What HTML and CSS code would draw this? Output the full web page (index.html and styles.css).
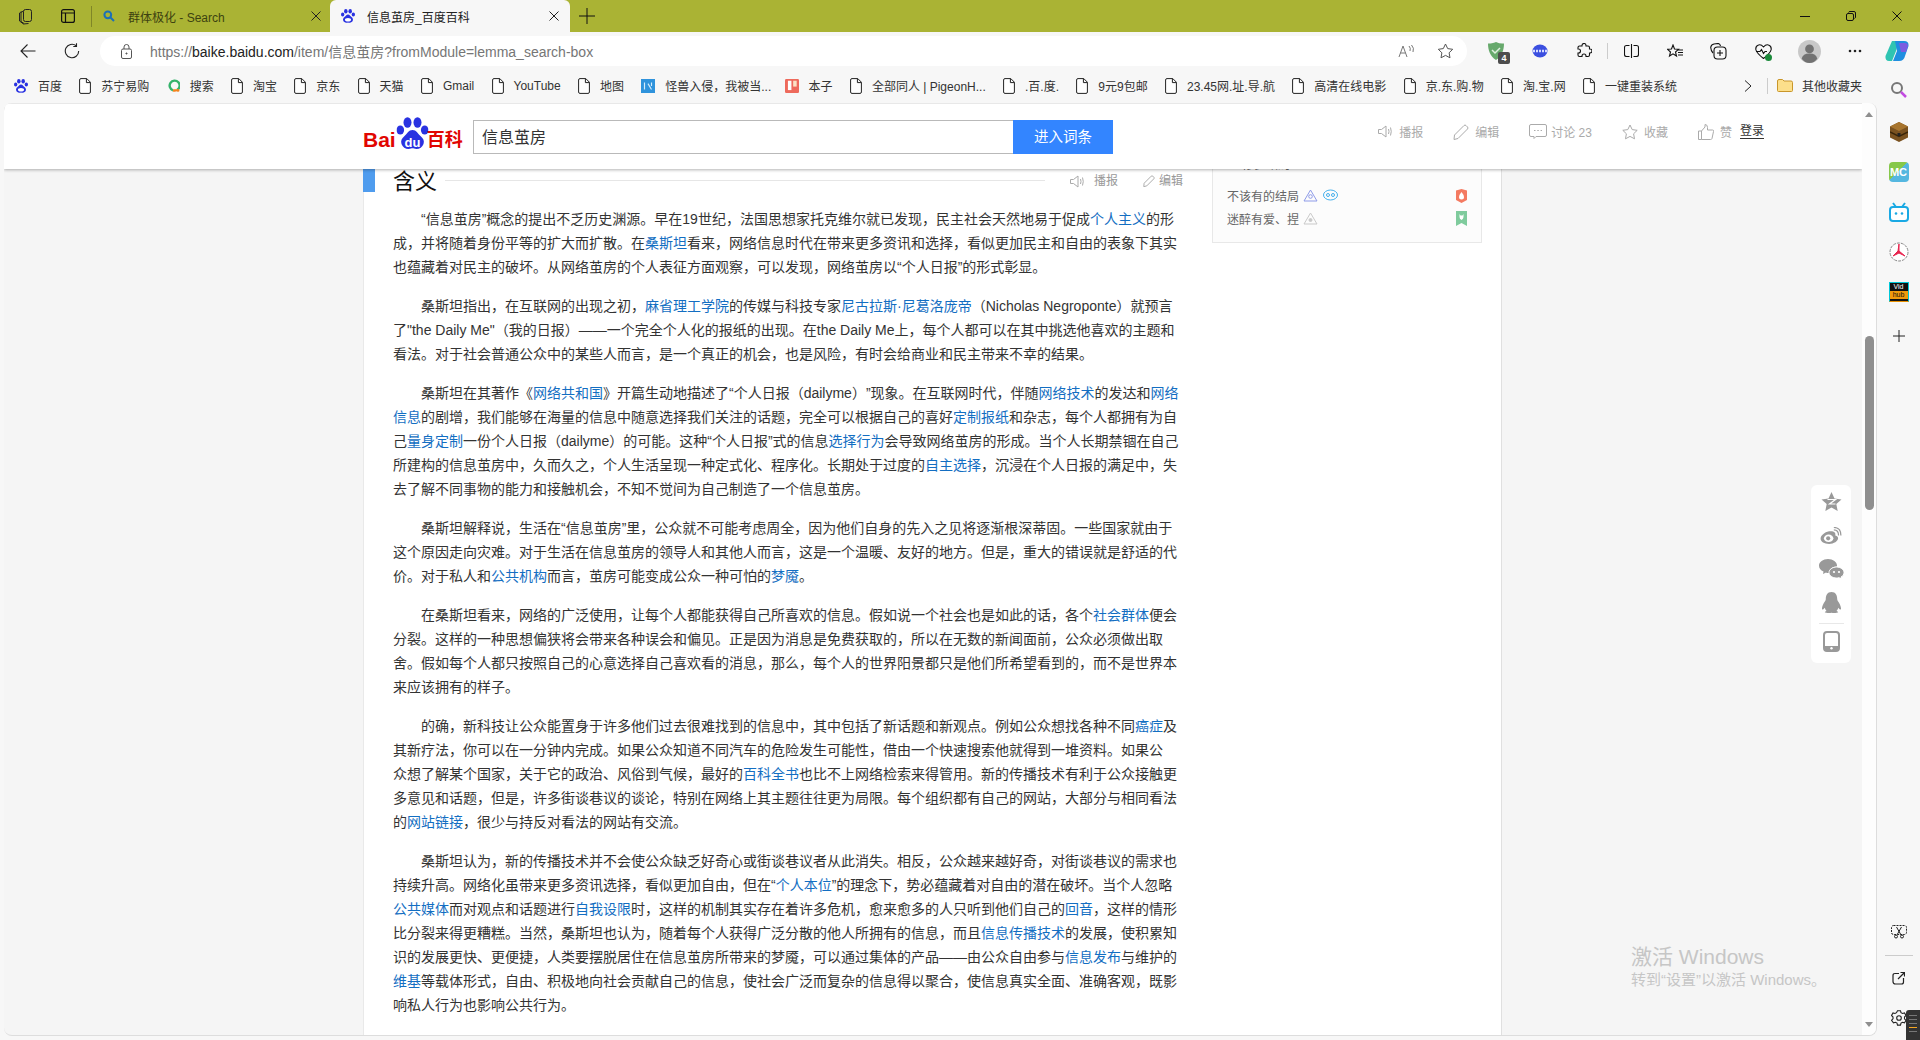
FILE: index.html
```html
<!DOCTYPE html>
<html lang="zh-CN">
<head>
<meta charset="UTF-8">
<title>信息茧房_百度百科</title>
<link rel="stylesheet" href="styles.css">
</head>
<body>

<svg class="defs" width="0" height="0">
  <symbol id="page" viewBox="0 0 12 16">
    <path d="M.6 2A1.400 1.400 0 0 1 2 .6h5.800l3.600 3.600V14A1.400 1.400 0 0 1 10 15.400H2A1.400 1.400 0 0 1 .6 14zM7.400.8v3.800h3.800" fill="#fff" stroke="#222" stroke-width="1"/>
  </symbol>
  <symbol id="paw" viewBox="0 0 32 33">
    <g fill="#2932e1">
      <ellipse cx="11" cy="5.500" rx="4" ry="5.200"/>
      <ellipse cx="21" cy="5.500" rx="4" ry="5.200"/>
      <ellipse cx="3.800" cy="13" rx="3.800" ry="4.600"/>
      <ellipse cx="28.200" cy="13" rx="3.800" ry="4.600"/>
      <path d="M16 13c4 0 5 3.500 8 6 3 2.500 4 5 3 8-1 3-4 5-7 5-2 0-3-.7-4-.7s-2 .7-4 .7c-3 0-6-2-7-5-1-3 0-5.500 3-8 3-2.500 4-6 8-6z"/>
    </g>
    <ellipse cx="16" cy="25" rx="7" ry="4" fill="#fff"/>
  </symbol>
</svg>

<div class="titlebar">
  <div class="tb-left">
    <svg width="16" height="18" viewBox="0 0 16 18" fill="none" stroke="#222"><rect x="5.500" y="2.500" width="8" height="12" rx="2"/><path d="M3.500 4.500 1.500 6v8l4 3 5-.5"/><path d="M5.500 4 3 5.500v9l3 2"/></svg>
    <svg width="14" height="14" viewBox="0 0 14 14" fill="none" stroke="#111" stroke-width="1.200"><rect x=".6" y=".6" width="12.800" height="12.800" rx="2"/><path d="M.6 4h12.800M4.500 4v9.400"/></svg>
    <span class="tb-sep"></span>
  </div>
  <div class="tab">
    <svg class="tab-fav" width="12" height="12" viewBox="0 0 12 12" fill="none" stroke="#1c6fb8" stroke-width="2"><circle cx="4.800" cy="4.800" r="3.400"/><path d="m7.500 7.500 3.500 3.500"/></svg>
    <span class="tab-name">群体极化 - Search</span>
    <svg width="10" height="10" viewBox="0 0 10 10" stroke="#222"><path d="m.5.500 9 9m0-9-9 9"/></svg>
  </div>
  <div class="tab tab-on">
    <svg class="tab-fav" width="14" height="16"><use href="#paw"/></svg>
    <span class="tab-name">信息茧房_百度百科</span>
    <svg width="10" height="10" viewBox="0 0 10 10" stroke="#222"><path d="m.5.500 9 9m0-9-9 9"/></svg>
  </div>
  <svg class="tab-plus" width="16" height="16" viewBox="0 0 16 16" stroke="#111"><path d="M8 0v16M0 8h16"/></svg>
  <div class="win-btns">
    <svg width="10" height="10" viewBox="0 0 10 10" stroke="#111"><path d="M0 5.500h10"/></svg>
    <svg width="10" height="10" viewBox="0 0 10 10" fill="none" stroke="#111"><rect x=".5" y="2.500" width="7" height="7" rx="1.500"/><path d="M2.500 1.500Q2.800.5 4 .5h4q1.500 0 1.500 1.500v4q0 1-1 1.500"/></svg>
    <svg width="10" height="10" viewBox="0 0 10 10" stroke="#111"><path d="m.5.500 9 9m0-9-9 9"/></svg>
  </div>
</div>

<div class="toolbar">
  <svg width="16" height="16" viewBox="0 0 16 16" fill="none" stroke="#222" stroke-width="1.100"><path d="M15.500 8H1M7.500 1.500 1 8l6.500 6.500"/></svg>
  <svg width="16" height="16" viewBox="0 0 16 16" fill="none" stroke="#222" stroke-width="1.100"><path d="M14.700 8A6.700 6.700 0 1 1 12.200 2.800M12.500.3v3.200H9.300"/></svg>
  <div class="addr">
    <svg width="13" height="15" viewBox="0 0 13 15" fill="none" stroke="#555"><rect x="1.500" y="5" width="10" height="9.500" rx="1.500"/><path d="M4 5V3a2.500 2.500 0 0 1 5 0v2"/><circle cx="6.500" cy="9.500" r=".6" fill="#555"/></svg>
    <span class="url">https://<b>baike.baidu.com</b>/item/信息茧房?fromModule=lemma_search-box</span>
    <span class="addr-right">
      <svg width="18" height="14" viewBox="0 0 18 14" fill="none" stroke="#777"><path d="m1 13 4-11 4 11M2.500 9h5"/><path d="M11 2q2 2 1 5M13.500 1q3 3 1.500 7"/></svg>
      <svg width="17" height="16" viewBox="0 0 16 16" fill="none" stroke="#555"><path d="m8 1 2.200 4.600 5 .7-3.600 3.500.9 5L8 12.400l-4.500 2.400.9-5L.8 6.300l5-.7z"/></svg>
    </span>
  </div>
  <div class="tool-icons">
    <span class="cell ext-guard">
      <svg width="16" height="18" viewBox="0 0 16 18"><path d="M8 0q4 2 8 1.500C16 8 14 14 8 18 2 14 0 8 0 1.500 4 2 8 0 8 0z" fill="#67a96c"/><path d="m4 8 3 3 5-5" fill="none" stroke="#dff0df" stroke-width="1.500"/></svg>
      <span class="ext-count">4</span>
    </span>
    <span class="cell"><svg width="16" height="14" viewBox="0 0 16 14"><ellipse cx="8" cy="7" rx="7.500" ry="6.500" fill="#3b4fe0"/><path d="M1 7h14" stroke="#d6dcff" stroke-width="2.500" stroke-dasharray="2 1"/></svg></span>
    <span class="cell"><svg width="16" height="16" viewBox="0 0 16 16" fill="none" stroke="#111" stroke-width="1.100"><path d="M6 2.500a2 2 0 0 1 4 0V3h2q1.500 0 1.500 1.500V6H14a2 2 0 0 1 0 4h-.5v2q0 1.500-1.500 1.500h-2V13a2 2 0 0 0-4 0v.5H3.500Q2 13.500 2 12v-2h.5a2 2 0 0 0 0-4H2V4.500Q2 3 3.500 3H6z"/></svg></span>
    <span class="tool-sep"></span>
    <span class="cell"><svg width="15" height="14" viewBox="0 0 15 14" fill="none" stroke="#111" stroke-width="1.100"><path d="M7.500 0v14M5.500 1.500h-3q-2 0-2 2v7q0 2 2 2h3M9.500 1.500h3q2 0 2 2v7q0 2-2 2h-3"/></svg></span>
    <span class="cell"><svg width="16" height="15" viewBox="0 0 16 15" fill="none" stroke="#111" stroke-width="1.100"><path d="M6 1 7.500 5l4 .3-3 2.700 1 4-3.500-2.200L2.500 12l1-4-3-2.700 4-.3zM11 6h5M11 8.500h5M11 11h5"/></svg></span>
    <span class="cell"><svg width="18" height="17" viewBox="0 0 18 17" fill="none" stroke="#111" stroke-width="1.100"><path d="M3 10Q1 8 .7 4.500 1 1.500 4 1l4-.5q2 0 2.500 2.500"/><rect x="4" y="4" width="12" height="12" rx="3.500"/><path d="M10 7v6M7 10h6"/></svg></span>
    <span class="cell ext-heart">
      <svg width="17" height="15" viewBox="0 0 17 15" fill="none" stroke="#111" stroke-width="1.100"><path d="M8.500 3Q6 0 3.500 1 .5 2 .8 5.500 1.500 9 8.500 14.500 15.500 9 16.200 5.500 16.500 2 13.500 1 11 0 8.500 3zM1 7.500h4l1.500-2 2 4 1.500-2h2"/></svg>
      <i class="heart-dot"></i>
    </span>
    <span class="cell cell-gap"><svg width="23" height="23" viewBox="0 0 22 22"><circle cx="11" cy="11" r="11" fill="#c8c8c8"/><circle cx="11" cy="8.500" r="4.200" fill="#727272"/><path d="M3.500 18q1-5 7.500-5t7.500 5Q15.500 22 11 22t-7.500-4z" fill="#727272"/></svg></span>
    <span class="cell cell-gap"><svg width="14" height="4" viewBox="0 0 14 4" fill="#222"><circle cx="2" cy="2" r="1.300"/><circle cx="7" cy="2" r="1.300"/><circle cx="12" cy="2" r="1.300"/></svg></span>
    <span class="cell cell-last"><svg width="24" height="24" viewBox="0 0 24 24"><path d="M7 2h7l-3 10-4 10H4Q0 22 .5 17z" fill="#2fc4b2"/><path d="M10 2h9q5 0 4.500 5L20 17q-1 5-6 5H8l4-10z" fill="#1f8ee0"/><path d="M14 4h6q3 0 3 3l-2 6h-5z" fill="#7b5de0"/></svg></span>
  </div>
</div>

<div class="bookmarks">
  <span class="bm"><svg width="14" height="16"><use href="#paw"/></svg>百度</span>
  <span class="bm"><svg width="12" height="16"><use href="#page"/></svg>苏宁易购</span>
  <span class="bm"><svg width="13" height="13" viewBox="0 0 13 13" fill="none"><path d="M10 11A5 5 0 1 0 6 11.300" stroke="#35b36b" stroke-width="2.400"/><circle cx="11" cy="11.400" r="1.400" fill="#f4831f"/><path d="M6 11.300Q8 11.800 10 11" stroke="#f4831f" stroke-width="2.400"/></svg>搜索</span>
  <span class="bm"><svg width="12" height="16"><use href="#page"/></svg>淘宝</span>
  <span class="bm"><svg width="12" height="16"><use href="#page"/></svg>京东</span>
  <span class="bm"><svg width="12" height="16"><use href="#page"/></svg>天猫</span>
  <span class="bm"><svg width="12" height="16"><use href="#page"/></svg>Gmail</span>
  <span class="bm"><svg width="12" height="16"><use href="#page"/></svg>YouTube</span>
  <span class="bm"><svg width="12" height="16"><use href="#page"/></svg>地图</span>
  <span class="bm bm-tight"><svg width="14" height="14" viewBox="0 0 12 12"><rect width="12" height="12" fill="#2f93dc"/><path d="M3 3v6M6 4l3 5M9 3v3" stroke="#d4ecfb"/></svg>怪兽入侵，我被当...</span>
  <span class="bm"><svg width="14" height="14" viewBox="0 0 12 12"><rect width="12" height="12" rx="1" fill="#ee6a5c"/><rect x="2.500" y="1.500" width="3" height="8" fill="#fff"/><rect x="7" y="1.500" width="3" height="5" fill="#fbe3c6"/></svg>本子</span>
  <span class="bm"><svg width="12" height="16"><use href="#page"/></svg>全部同人 | PigeonH...</span>
  <span class="bm"><svg width="12" height="16"><use href="#page"/></svg>.百.度.</span>
  <span class="bm"><svg width="12" height="16"><use href="#page"/></svg>9元9包邮</span>
  <span class="bm"><svg width="12" height="16"><use href="#page"/></svg>23.45网.址.导.航</span>
  <span class="bm"><svg width="12" height="16"><use href="#page"/></svg>高清在线电影</span>
  <span class="bm"><svg width="12" height="16"><use href="#page"/></svg>京.东.购.物</span>
  <span class="bm"><svg width="12" height="16"><use href="#page"/></svg>淘.宝.网</span>
  <span class="bm"><svg width="12" height="16"><use href="#page"/></svg>一键重装系统</span>
  <svg class="bm-more" width="8" height="12" viewBox="0 0 8 12" fill="none" stroke="#222"><path d="m1 .5 6 5.500-6 5.500"/></svg>
  <span class="bm-sep"></span>
  <span class="bm bm-folder"><svg width="16" height="13" viewBox="0 0 16 13"><path d="M.5 2Q.5.500 2 .500h3.500l1.500 1.500h7q1.500 0 1.500 1.500v8q0 1-1 1H1.500q-1 0-1-1z" fill="#fcdf8b" stroke="#c9962a"/></svg>其他收藏夹</span>
</div>

<div class="window">
  <div class="viewport">
    <div class="wiki-header">
      <div class="logo">
        <span class="logo-bai">Bai</span>
        <svg class="logo-paw" width="35" height="33" viewBox="0 0 32 33">
          <use href="#paw" width="32" height="33"/>
          <ellipse cx="16" cy="25" rx="10" ry="6" fill="#2932e1"/>
          <text x="16" y="30" text-anchor="middle" class="paw-du">du</text>
        </svg>
        <span class="logo-bk">百科</span>
      </div>
      <div class="search">
        <div class="search-input">信息茧房</div>
        <div class="search-btn">进入词条</div>
      </div>
      <div class="actions">
        <span class="action"><svg width="15" height="13" viewBox="0 0 15 13" fill="none" stroke="#aaa"><path d="M.5 4.500h3L8 1v11L3.500 8.500h-3zM10.500 4q1 2.500 0 5M12.500 2.500q1.500 4 0 8"/></svg>播报</span>
        <span class="action"><svg width="16" height="16" viewBox="0 0 16 16" fill="none" stroke="#aaa"><path d="M1.500 11 11 1.500q1-1 2 0l1.500 1.500q1 1 0 2L5 14.500l-4 1z"/></svg>编辑</span>
        <span class="action action-talk"><svg width="18" height="15" viewBox="0 0 18 15" fill="none" stroke="#aaa"><path d="M2 .5h14q1.500 0 1.500 1.500v9q0 1.500-1.500 1.500H7l-2 2v-2H2Q.5 12.500.5 11V2Q.5.500 2 .500z"/><path d="M5 6.500h1.500m1.800 0h1.500m1.800 0H13"/></svg>讨论 23</span>
        <span class="action"><svg width="16" height="16" viewBox="0 0 16 16" fill="none" stroke="#aaa"><path d="m8 1 2.200 4.600 5 .7-3.600 3.500.9 5L8 12.400l-4.500 2.400.9-5L.8 6.300l5-.7z"/></svg>收藏</span>
        <span class="action action-like"><svg width="16" height="16" viewBox="0 0 16 16" fill="none" stroke="#aaa"><path d="M.5 7h3v8.500h-3zM3.500 7 7 3V.500q2.500 0 2.500 3V6h5q1.500 0 1 1.500l-1.500 7q-.3 1-1.500 1h-9"/></svg>赞</span>
        <span class="login">登录</span>
      </div>
    </div>

    <div class="page-body">
      <div class="article">
        <div class="para-title">
          <i class="title-mark"></i>
          <h2>含义</h2>
          <span class="title-line"></span>
          <span class="title-act title-act-one"><svg width="15" height="13" viewBox="0 0 15 13" fill="none" stroke="#aaa"><path d="M.5 4.500h3L8 1v11L3.500 8.500h-3zM10.500 4q1 2.500 0 5M12.500 2.500q1.500 4 0 8"/></svg>播报</span>
          <span class="title-act"><svg width="12" height="12" viewBox="0 0 16 16" fill="none" stroke="#aaa" stroke-width="1.300"><path d="M1.500 11 11 1.500q1-1 2 0l1.500 1.500q1 1 0 2L5 14.500l-4 1z"/></svg>编辑</span>
        </div>

        <p>“信息茧房”概念的提出不乏历史渊源。早在19世纪，法国思想家托克维尔就已发现，民主社会天然地易于促成<a>个人主义</a>的形<br>
        成，并将随着身份平等的扩大而扩散。在<a>桑斯坦</a>看来，网络信息时代在带来更多资讯和选择，看似更加民主和自由的表象下其实<br>
        也蕴藏着对民主的破坏。从网络茧房的个人表征方面观察，可以发现，网络茧房以“个人日报”的形式彰显。</p>

        <p>桑斯坦指出，在互联网的出现之初，<a>麻省理工学院</a>的传媒与科技专家<a>尼古拉斯·尼葛洛庞帝</a>（Nicholas Negroponte）就预言<br>
        了"the Daily Me"（我的日报）——一个完全个人化的报纸的出现。在the Daily Me上，每个人都可以在其中挑选他喜欢的主题和<br>
        看法。对于社会普通公众中的某些人而言，是一个真正的机会，也是风险，有时会给商业和民主带来不幸的结果。</p>

        <p>桑斯坦在其著作《<a>网络共和国</a>》开篇生动地描述了“个人日报（dailyme）”现象。在互联网时代，伴随<a>网络技术</a>的发达和<a>网络</a><br>
        <a>信息</a>的剧增，我们能够在海量的信息中随意选择我们关注的话题，完全可以根据自己的喜好<a>定制报纸</a>和杂志，每个人都拥有为自<br>
        己<a>量身定制</a>一份个人日报（dailyme）的可能。这种“个人日报”式的信息<a>选择行为</a>会导致网络茧房的形成。当个人长期禁锢在自己<br>
        所建构的信息茧房中，久而久之，个人生活呈现一种定式化、程序化。长期处于过度的<a>自主选择</a>，沉浸在个人日报的满足中，失<br>
        去了解不同事物的能力和接触机会，不知不觉间为自己制造了一个信息茧房。</p>

        <p>桑斯坦解释说，生活在“信息茧房”里，公众就不可能考虑周全，因为他们自身的先入之见将逐渐根深蒂固。一些国家就由于<br>
        这个原因走向灾难。对于生活在信息茧房的领导人和其他人而言，这是一个温暖、友好的地方。但是，重大的错误就是舒适的代<br>
        价。对于私人和<a>公共机构</a>而言，茧房可能变成公众一种可怕的<a>梦魇</a>。</p>

        <p>在桑斯坦看来，网络的广泛使用，让每个人都能获得自己所喜欢的信息。假如说一个社会也是如此的话，各个<a>社会群体</a>便会<br>
        分裂。这样的一种思想偏狭将会带来各种误会和偏见。正是因为消息是免费获取的，所以在无数的新闻面前，公众必须做出取<br>
        舍。假如每个人都只按照自己的心意选择自己喜欢看的消息，那么，每个人的世界阳景都只是他们所希望看到的，而不是世界本<br>
        来应该拥有的样子。</p>

        <p>的确，新科技让公众能置身于许多他们过去很难找到的信息中，其中包括了新话题和新观点。例如公众想找各种不同<a>癌症</a>及<br>
        其新疗法，你可以在一分钟内完成。如果公众知道不同汽车的危险发生可能性，借由一个快速搜索他就得到一堆资料。如果公<br>
        众想了解某个国家，关于它的政治、风俗到气候，最好的<a>百科全书</a>也比不上网络检索来得管用。新的传播技术有利于公众接触更<br>
        多意见和话题，但是，许多街谈巷议的谈论，特别在网络上其主题往往更为局限。每个组织都有自己的网站，大部分与相同看法<br>
        的<a>网站链接</a>，很少与持反对看法的网站有交流。</p>

        <p>桑斯坦认为，新的传播技术并不会使公众缺乏好奇心或街谈巷议者从此消失。相反，公众越来越好奇，对街谈巷议的需求也<br>
        持续升高。网络化虽带来更多资讯选择，看似更加自由，但在“<a>个人本位</a>”的理念下，势必蕴藏着对自由的潜在破坏。当个人忽略<br>
        <a>公共媒体</a>而对观点和话题进行<a>自我设限</a>时，这样的机制其实存在着许多危机，愈来愈多的人只听到他们自己的<a>回音</a>，这样的情形<br>
        比分裂来得更糟糕。当然，桑斯坦也认为，随着每个人获得广泛分散的他人所拥有的信息，而且<a>信息传播技术</a>的发展，使积累知<br>
        识的发展更快、更便捷，人类要摆脱居住在信息茧房所带来的梦魇，可以通过集体的产品——由公众自由参与<a>信息发布</a>与维护的<br>
        <a>维基</a>等载体形式，自由、积极地向社会贡献自己的信息，使社会广泛而复杂的信息得以聚合，使信息真实全面、准确客观，既影<br>
        响私人行为也影响公共行为。</p>
      </div>

      <div class="side-card">
        <div class="card-row card-row-cut"><span>▪ ▪ 修罗结局</span></div>
        <div class="card-row">
          <span>不该有的结局</span>
          <svg width="15" height="13" viewBox="0 0 15 13" fill="none" stroke="#8e9be8"><path d="M7.500 1 14 12H1z"/><circle cx="7.500" cy="7.500" r="1.800"/></svg>
          <svg class="card-ico2" width="15" height="13" viewBox="0 0 15 13" fill="none" stroke="#45b0ec"><ellipse cx="7.500" cy="6" rx="7" ry="5"/><circle cx="5" cy="6" r="1.500"/><circle cx="10" cy="6" r="1.500"/></svg>
          <svg class="card-flag" width="11" height="14" viewBox="0 0 11 14"><path d="M0 1.500 5.500 0 11 1.500V11l-5.500 3L0 11z" fill="#f47a61"/><path d="M5.500 3Q8 6 8 8a2.500 2.500 0 0 1-5 0q0-2 2.500-5z" fill="#fff"/></svg>
        </div>
        <div class="card-row">
          <span>迷醉有爱、捏</span>
          <svg width="15" height="13" viewBox="0 0 15 13" fill="none" stroke="#c9c9c9"><path d="M7.500 1 14 12H1z"/><circle cx="7.500" cy="8" r="1.500" fill="#c9c9c9"/></svg>
          <svg class="card-flag" width="11" height="15" viewBox="0 0 11 15"><path d="M0 0h11v15l-5.500-3L0 15z" fill="#7fcb9d"/><path d="M3.500 3v3q0 2 2 3 2-1 2-3V3l-1 1.500h-2z" fill="#fff"/></svg>
        </div>
      </div>
    </div>

    <div class="scrollbar">
      <i class="arrow-up"></i>
      <div class="scroll-track"><div class="scroll-thumb"></div></div>
      <i class="arrow-down"></i>
    </div>

    <div class="share-panel">
      <svg width="21" height="20" viewBox="0 0 20 20"><path d="m10 0 3 6.600 7 .8-5.200 4.700L16.200 19 10 15.500 3.800 19l1.400-6.900L0 7.400l7-.8z" fill="#999"/><path d="M6 7.500h8L8 12h6" fill="none" stroke="#fff" stroke-width="1.200"/></svg>
      <svg width="22" height="17" viewBox="0 0 22 18"><path d="M9 4.500C4 5.500 0 9 0 12.500 0 15.500 4 18 9 18s9.500-3 9.500-6c0-2-2-3-3-3 .8-3-1-5-6.500-4.500z" fill="#999"/><ellipse cx="8.500" cy="12" rx="5" ry="4" fill="#fff"/><circle cx="8" cy="12" r="2.200" fill="#999"/><path d="M14 3q5 0 5 6M14 .5q7.500 0 7.500 8.500" fill="none" stroke="#999" stroke-width="1.300"/></svg>
      <svg width="25" height="20" viewBox="0 0 25 20"><path d="M9 0c5 0 9 3 9 6.500 0 .5 0 .5-.1 1-4.500 0-7.900 3-7.900 6 0 .5 0 .5.100.5H9q-1 0-2-.5L4 15l.5-2.500Q0 10.500 0 6.500C0 3 4 0 9 0z" fill="#999"/><path d="M17.500 8c4 0 7.500 2.500 7.500 5.500 0 2-1 3.500-3 4.500l.5 2-2.500-1.300q-1.200.3-2.500.3c-4 0-7.500-2.500-7.500-5.500S13.500 8 17.500 8z" fill="#999" stroke="#fff"/><circle cx="15" cy="13" r="1.100" fill="#fff"/><circle cx="20" cy="13" r="1.100" fill="#fff"/></svg>
      <svg class="share-qq" width="21" height="21" viewBox="0 0 21 22"><path d="M10.500 0C15 0 16.500 3.500 16.500 7.500c0 .7.300 1.500.8 2.300 1.700 2.400 3.200 5.700 3.200 7.700 0 .8-.5 1-1.500.5l-1.500-1.500c-.2 1.300-.8 2.500-1.800 3.300 1.300.4 1.800 1 1.800 1.500 0 .5-2.500.7-4.500.7-1 0-1.500-.3-2.500-.3s-1.500.3-2.500.3c-2 0-4.500-.2-4.500-.7s.5-1.100 1.800-1.500c-1-.8-1.600-2-1.800-3.300L2 18c-1 .5-1.500.3-1.500-.5 0-2 1.500-5.300 3.200-7.700.5-.8.800-1.600.8-2.300C4.500 3.500 6 0 10.500 0z" fill="#999"/></svg>
      <span class="share-sep"></span>
      <svg width="17" height="21" viewBox="0 0 17 21"><rect x="1" y="1" width="15" height="19" rx="3" fill="none" stroke="#999" stroke-width="2"/><rect x="1" y="15" width="15" height="5" rx="1" fill="#999"/><circle cx="8.500" cy="17.300" r="1.200" fill="#fff"/></svg>
    </div>

    <div class="activate">
      <div class="activate-big">激活 Windows</div>
      <div class="activate-small">转到“设置”以激活 Windows。</div>
    </div>
  </div>

  <div class="edge-bar">
    <svg width="18" height="18" viewBox="0 0 18 18" fill="none"><circle cx="7" cy="7" r="5" stroke="#777" stroke-width="2"/><path d="m11 11 5 5" stroke="#c24ce0" stroke-width="2.500"/></svg>
    <svg class="edge-chest" width="18" height="20" viewBox="0 0 18 20"><path d="M9 0l9 4.500v11L9 20l-9-4.500v-11z" fill="#7a5220"/><path d="M0 4.500 9 9l9-4.500L9 0z" fill="#a8752e"/><path d="M0 10l9 4.500 9-4.500" fill="none" stroke="#3a2508" stroke-width="1.500"/><rect x="7.500" y="11" width="3" height="3" fill="#222"/></svg>
    <span class="mc-badge">MC</span>
    <svg width="20" height="20" viewBox="0 0 20 20"><path d="m4 1 3 4M16 1l-3 4" stroke="#1aa9e4" stroke-width="2"/><rect x="1" y="5" width="18" height="14" rx="3" fill="#fff" stroke="#1aa9e4" stroke-width="2"/><circle cx="7" cy="11.500" r="1.300" fill="#1aa9e4"/><circle cx="13" cy="11.500" r="1.300" fill="#1aa9e4"/></svg>
    <svg width="20" height="20" viewBox="0 0 20 20"><circle cx="10" cy="10" r="9" fill="#fff" stroke="#888" stroke-dasharray="3 1"/><path d="M10 2v7l6 5-6-3-6 3 5-5z" fill="#e8254f" stroke="#e8254f"/></svg>
    <div class="vid-badge"><span>Vid</span><b>hub</b></div>
    <svg class="edge-plus" width="14" height="14" viewBox="0 0 14 14" stroke="#222"><path d="M7 1v12M1 7h12"/></svg>
    <div class="edge-bottom">
      <svg width="16" height="14" viewBox="0 0 16 14" fill="none" stroke="#222"><rect x=".5" y=".5" width="15" height="9" rx="2" stroke-dasharray="2 1"/><path d="m5.500 2 4 7M10.500 2l-4 7"/><circle cx="5" cy="11.500" r="1.500"/><circle cx="11" cy="11.500" r="1.500"/></svg>
      <span class="edge-sep"></span>
      <svg width="13" height="13" viewBox="0 0 13 13" fill="none" stroke="#222" stroke-width="1.200"><path d="M7 1.500H3Q1 1.500 1 3.500v6q0 2.500 2.500 2.500h6q2 0 2-2V6M6 7l6.500-6.500M8.500.5h4v4"/></svg>
      <svg class="edge-gear" width="16" height="16" viewBox="0 0 16 16" fill="none" stroke="#222" stroke-width="1.100"><path d="M6.500.7h3l.5 2 1.500.8 2-.6 1.500 2.600-1.500 1.500v1.800l1.500 1.500-1.500 2.600-2-.6-1.500.8-.5 2h-3l-.5-2-1.500-.8-2 .6L.5 10.300 2 8.800V7L.5 5.500 2 2.900l2 .6 1.500-.8z"/><circle cx="8" cy="8" r="2.300"/></svg>
    </div>
  </div>
</div>

<div class="corner-widget"><i></i><i></i><i></i><i class="corner-on"></i><i></i></div>

</body>
</html>
```

FILE: styles.css
```css
* {
  box-sizing: border-box;
}
html, body {
  margin: 0;
  height: 1040px;
  overflow: hidden;
}
body {
  position: relative;
  width: 1920px;
  background: #f7f7f7;
  color: #222;
  font-family: "Liberation Sans", "Noto Sans CJK SC", sans-serif;
  font-size: 12px;
}
svg {
  display: block;
  flex: none;
}
.defs {
  position: absolute;
}
.paw-du {
  fill: #fff;
  font: bold 13px "Liberation Sans", sans-serif;
}

/* title bar */
.titlebar {
  height: 32px;
  display: flex;
  background: #aab334;
  align-items: center;
}
.tb-left {
  width: 96px;
  display: flex;
  align-items: center;
  padding-left: 18px;
  gap: 27px;
}
.tb-sep {
  width: 1px;
  height: 21px;
  background: #7f8627;
  margin-left: -11px;
}
.tab {
  width: 234px;
  height: 32px;
  display: flex;
  align-items: center;
  padding: 0 9px 0 7px;
}
.tab-name {
  margin-left: 13px;
  flex: 1;
  white-space: nowrap;
  color: #3d4210;
}
.tab-on {
  width: 240px;
  padding: 0 11px;
  background: #f7f7f7;
  border-radius: 6px 6px 0 0;
}
.tab-on .tab-name {
  color: #222;
  margin-left: 12px;
}
.tab-plus {
  margin-left: 9px;
}
.win-btns {
  margin-left: auto;
  padding-right: 18px;
  display: flex;
  align-items: center;
  gap: 36px;
}

/* address row */
.toolbar {
  height: 38px;
  display: flex;
  align-items: center;
  padding-left: 20px;
  gap: 28px;
  background: #f7f7f7;
}
.addr {
  flex: none;
  width: 1367px;
  height: 30px;
  margin-left: -8px;
  display: flex;
  align-items: center;
  padding: 0 13px 0 20px;
  background: #fff;
  border-radius: 15px;
}
.url {
  margin-left: 17px;
  font-size: 14px;
  color: #767676;
  white-space: nowrap;
}
.url b {
  font-weight: normal;
  color: #222;
}
.addr-right {
  margin-left: auto;
  display: flex;
  align-items: center;
  gap: 21px;
}
.tool-icons {
  flex: none;
  display: flex;
  align-items: center;
  margin-left: -21px;
}
.cell {
  flex: none;
  position: relative;
  width: 44px;
  height: 24px;
  display: flex;
  align-items: center;
  justify-content: center;
}
.cell-gap {
  margin-left: 2px;
}
.cell-last {
  width: 40px;
}
.ext-count {
  position: absolute;
  left: 24px;
  top: 13px;
  width: 12px;
  height: 12px;
  border-radius: 2px;
  background: #4d4d4d;
  color: #fff;
  font-size: 9px;
  font-weight: bold;
  line-height: 12px;
  text-align: center;
}
.tool-sep {
  flex: none;
  width: 1px;
  height: 16px;
  margin: 0 1px;
  background: #ccc;
}
.heart-dot {
  position: absolute;
  left: 24px;
  top: 15px;
  width: 7px;
  height: 7px;
  border-radius: 50%;
  background: #1b8a3a;
}

/* bookmarks */
.bookmarks {
  height: 33px;
  display: flex;
  align-items: center;
  padding: 0 10px 2px 14px;
  gap: 17.3px;
  white-space: nowrap;
  background: #f7f7f7;
}
.bm {
  display: flex;
  align-items: center;
  gap: 10px;
  color: #333;
}
.bm-tight {
  margin-right: -4px;
}
.bm-more {
  margin-left: auto;
  margin-right: -3px;
}
.bm-sep {
  width: 1px;
  height: 16px;
  background: #ccc;
}
.bm-folder {
  gap: 9px;
  margin-left: -8px;
  margin-right: 48px;
}

/* page frame */
.window {
  height: 937px;
  display: flex;
  padding-left: 4px;
  background: #f7f7f7;
}
.viewport {
  position: relative;
  width: 1873px;
  height: 933px;
  display: flex;
  flex-wrap: wrap;
  align-content: flex-start;
  overflow: hidden;
  background: #f5f5f5;
  border-radius: 8px;
  border-right: 1px solid #ddd;
  border-bottom: 1px solid #ddd;
}
.wiki-header {
  position: relative;
  z-index: 2;
  width: 1858px;
  height: 66px;
  display: flex;
  align-items: center;
  padding-left: 359px;
  background: #fff;
  border-top: 1px solid #e8e8e8;
  box-shadow: 0 1px 3px rgba(0, 0, 0, 0.3);
}
.logo {
  width: 110px;
  height: 33px;
  margin-top: -6px;
  display: flex;
  align-items: flex-end;
  color: #e10601;
  font-weight: bold;
}
.logo-bai {
  font-size: 21px;
  line-height: 20px;
}
.logo-paw {
  margin: 0 -3px 0 -1px;
}
.logo-bk {
  font-size: 18px;
  line-height: 20px;
  white-space: nowrap;
}
.search {
  display: flex;
  height: 34px;
}
.search-input {
  width: 540px;
  padding-left: 8px;
  border: 1px solid #b9b9b9;
  border-right: 0;
  font-size: 16px;
  line-height: 33px;
  color: #333;
}
.search-btn {
  width: 100px;
  background: #3385ff;
  color: #fff;
  font-size: 14.5px;
  line-height: 34px;
  text-align: center;
}
.actions {
  margin-left: auto;
  padding-right: 98px;
  display: flex;
  align-items: center;
  gap: 30px;
  margin-top: -10px;
  color: #aaa;
}
.action {
  display: flex;
  align-items: center;
  gap: 6px;
}
.action-talk {
  gap: 4px;
}
.action-like {
  margin-right: -22px;
}
.login {
  color: #333;
  border-bottom: 1px solid #333;
  line-height: 14px;
}

/* article */
.page-body {
  width: 1858px;
  height: 867px;
  display: flex;
  overflow: hidden;
  padding-left: 359px;
}
.article {
  position: relative;
  width: 1139px;
  height: 100%;
  padding: 0 0 0 29px;
  background: #fff;
  border-left: 1px solid #e9e9e9;
  border-right: 1px solid #e0e0e0;
  font-size: 14px;
  line-height: 24px;
  color: #333;
  text-spacing-trim: space-all;
}
.para-title {
  height: 24px;
  width: 790px;
  display: flex;
  align-items: center;
  margin-bottom: 14px;
  white-space: nowrap;
}
.title-mark {
  position: absolute;
  left: -1px;
  top: 0;
  width: 12px;
  height: 23px;
  background: #4f9cee;
}
.para-title h2 {
  margin: 2px 0 0;
  font-size: 22px;
  font-weight: normal;
  line-height: 24px;
  color: #111;
}
.title-line {
  flex: none;
  width: 600px;
  height: 1px;
  margin: -2px 0 0 8px;
  background: #e6e6e6;
}
.title-act {
  display: flex;
  align-items: center;
  gap: 4px;
  font-size: 12px;
  color: #999;
  margin-left: 25px;
}
.title-act-one {
  gap: 9px;
}
.article p {
  margin: 0 0 15px;
  text-indent: 28px;
  white-space: nowrap;
}
.article a {
  color: #136ec2;
}
.side-card {
  width: 270px;
  height: 96px;
  margin: -22px 0 0 -290px;
  position: relative;
  padding: 2px 14px 0;
  background: #fcfcfc;
  border: 1px solid #e8e8e8;
  color: #666;
  font-size: 12px;
}
.card-row {
  height: 23px;
  display: flex;
  align-items: center;
  gap: 4px;
  white-space: nowrap;
}
.card-row-cut {
  height: 34px;
  padding-bottom: 8px;
}
.card-ico2 {
  margin-left: 1px;
}
.card-flag {
  margin-left: auto;
}

/* scrollbar */
.scrollbar {
  position: absolute;
  right: 0;
  top: 0;
  z-index: 3;
  width: 14px;
  height: 933px;
  background: #fdfdfd;
  display: flex;
  flex-direction: column;
  align-items: center;
  padding: 9px 0;
}
.arrow-up, .arrow-down {
  width: 0;
  height: 0;
  border: 4.5px solid transparent;
}
.arrow-up {
  border-bottom: 5px solid #8f8f8f;
  border-top: 0;
}
.arrow-down {
  border-top: 5px solid #8f8f8f;
  border-bottom: 0;
}
.scroll-track {
  flex: 1;
  width: 9px;
  padding-top: 219px;
}
.scroll-thumb {
  height: 174px;
  border-radius: 5px;
  background: #8f8f8f;
}

/* floating share panel */
.share-panel {
  position: absolute;
  z-index: 3;
  left: 1807px;
  top: 382px;
  width: 40px;
  height: 178px;
  padding-top: 7px;
  display: flex;
  flex-direction: column;
  align-items: center;
  gap: 15px;
  background: #fff;
  border-radius: 6px;
}
.share-qq {
  margin-top: -2px;
}
.share-sep {
  width: 25px;
  height: 1px;
  background: #e8e8e8;
  margin: -5px 0 -8px;
}
.activate {
  position: absolute;
  z-index: 3;
  left: 1627px;
  top: 841px;
  color: #c6c6c6;
  white-space: nowrap;
}
.activate-big {
  font-size: 21px;
  line-height: 26px;
}
.activate-small {
  font-size: 15px;
  line-height: 20px;
}

/* edge sidebar */
.edge-bar {
  flex: 1;
  height: 959px;
  display: flex;
  flex-direction: column;
  align-items: center;
  gap: 20px;
  margin-top: -22px;
  position: relative;
  z-index: 4;
}
.edge-chest {
  margin-top: 3px;
}
.mc-badge {
  width: 20px;
  height: 20px;
  border-radius: 4px;
  background: linear-gradient(135deg, #86c84a 45%, #55b7e0 46%);
  color: #fff;
  font-size: 11px;
  font-weight: bold;
  line-height: 20px;
  text-align: center;
}
.vid-badge {
  width: 20px;
  height: 20px;
  display: flex;
  flex-direction: column;
  align-items: center;
  background: #111;
  border: 1px solid #00c8d8;
  border-bottom-color: #e89000;
  color: #fff;
  font-size: 7px;
  line-height: 8px;
}
.vid-badge b {
  width: 100%;
  background: #f19a0c;
  color: #111;
  font-weight: normal;
  text-align: center;
}
.edge-plus {
  margin-top: 7px;
}
.edge-bottom {
  margin-top: auto;
  margin-bottom: 14px;
  display: flex;
  flex-direction: column;
  align-items: center;
  gap: 16px;
}
.edge-sep {
  width: 28px;
  height: 1px;
  background: #ccc;
}
.edge-gear {
  margin-top: 9px;
}
.corner-widget {
  position: absolute;
  z-index: 5;
  right: 0;
  bottom: 0;
  width: 14px;
  height: 30px;
  padding: 5px 3px 0;
  display: flex;
  flex-direction: column;
  gap: 3px;
  background: #333;
  border-radius: 3px 0 0 0;
}
.corner-widget i {
  height: 1px;
  background: #777;
}
.corner-widget .corner-on {
  background: #f5a623;
}
```
